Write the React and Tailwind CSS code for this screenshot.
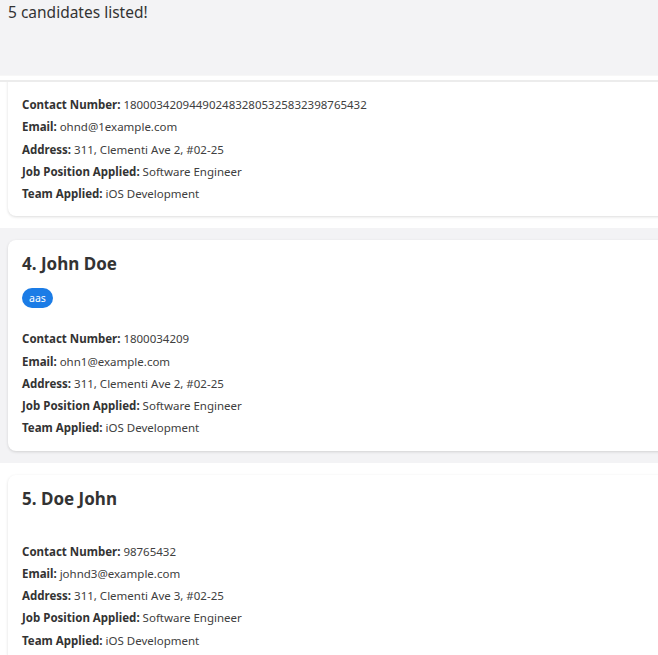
const candidates = [
  {
    id: 3,
    name: "Jane Doe",
    tags: [],
    phone: "1800034209449024832805325832398765432",
    email: "ohnd@1example.com",
    address: "311, Clementi Ave 2, #02-25",
    position: "Software Engineer",
    team: "iOS Development",
  },
  {
    id: 4,
    name: "John Doe",
    tags: ["aas"],
    phone: "1800034209",
    email: "ohn1@example.com",
    address: "311, Clementi Ave 2, #02-25",
    position: "Software Engineer",
    team: "iOS Development",
    selected: true,
  },
  {
    id: 5,
    name: "Doe John",
    tags: [],
    phone: "98765432",
    email: "johnd3@example.com",
    address: "311, Clementi Ave 3, #02-25",
    position: "Software Engineer",
    team: "iOS Development",
  },
];

function Field({ label, value }) {
  return (
    <div className="h-[22.25px] leading-[22.25px] whitespace-nowrap">
      <span className="font-bold text-[#333]">{label}:</span>{" "}
      <span className="text-[#404040]">{value}</span>
    </div>
  );
}

function CandidateCard({ c }) {
  return (
    <div className={c.selected ? "bg-[#f3f3f5] pl-2 py-3" : "bg-white pl-2 py-3"}>
      <div className="w-[720px] bg-white rounded-lg shadow-[0_1px_3px_rgba(0,0,0,0.14)] pl-[14px] pt-3 pb-[11px]">
        <h2 className="text-[17px] leading-6 font-bold text-[#333]">
          {c.id}. {c.name}
        </h2>
        <div className={c.tags.length ? "flex gap-1 mt-3 mb-5" : "flex gap-1 mt-3 mb-[18px]"}>
          {c.tags.map((t) => (
            <span
              key={t}
              className="h-5 px-[7px] rounded-full bg-[#1b7ce6] text-white text-[10.5px] leading-5"
            >
              {t}
            </span>
          ))}
        </div>
        <div className="text-[11.5px]">
          <Field label="Contact Number" value={c.phone} />
          <Field label="Email" value={c.email} />
          <Field label="Address" value={c.address} />
          <Field label="Job Position Applied" value={c.position} />
          <Field label="Team Applied" value={c.team} />
        </div>
      </div>
    </div>
  );
}

export default function App() {
  return (
    <div className="h-screen overflow-hidden bg-white" style={{ fontFamily: '"Noto Sans", "Open Sans", sans-serif' }}>
      {/* Header */}
      <div className="h-[75px] bg-[#f3f3f5] px-2">
        <p className="text-[15.5px] leading-6 text-[#333]">5 candidates listed!</p>
      </div>
      <div className="h-[5px] border-t border-[#f7f7f7] bg-white" />

      {/* List (scrolled) */}
      <div className="border-t-2 border-[#ececec] overflow-hidden">
        <div className="-mt-[66px]">
          {candidates.map((c) => (
            <CandidateCard key={c.id} c={c} />
          ))}
        </div>
      </div>
    </div>
  );
}
